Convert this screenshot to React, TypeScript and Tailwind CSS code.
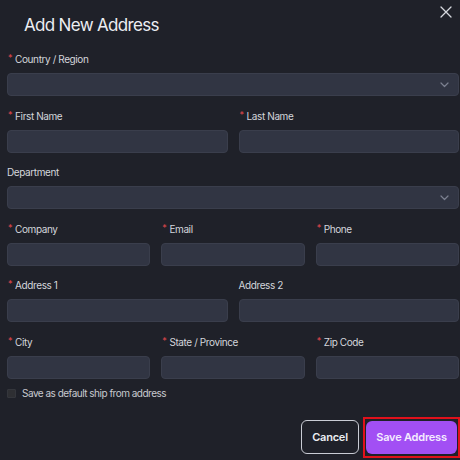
import React from "react";

const font = { fontFamily: "Inter, 'Noto Sans', sans-serif" };

function Label({ text, required }: { text: string; required?: boolean }) {
  return (
    <div className="flex items-center h-[14px] text-[10px] leading-[14px] text-[#d4d6dc] tracking-[-0.04em] mb-[7px]">
      {required ? (
        <span className="text-[#e5484d] text-[9px] mr-[3px] ml-[1px] -mt-[2px]">*</span>
      ) : null}
      <span>{text}</span>
    </div>
  );
}

function Input({ select }: { select?: boolean }) {
  return (
    <div className="relative h-[23px] rounded-[4px] bg-[#313543] border border-[#3a3e4c]">
      {select ? (
        <svg
          className="absolute right-[9px] top-[8px]"
          width="9"
          height="6"
          viewBox="0 0 9 6"
          fill="none"
        >
          <path d="M1 1l3.5 3.5L8 1" stroke="#7c8090" strokeWidth="1.2" strokeLinecap="round" strokeLinejoin="round" />
        </svg>
      ) : null}
    </div>
  );
}

function Field({ label, required, select }: { label: string; required?: boolean; select?: boolean }) {
  return (
    <div className="flex flex-col">
      <Label text={label} required={required} />
      <Input select={select} />
    </div>
  );
}

export default function App() {
  return (
    <div className="w-[460px] h-[460px] bg-[#1f2129] relative overflow-hidden" style={font}>
      <button className="absolute left-[440px] top-[6px] w-[12px] h-[12px] flex items-center justify-center">
        <svg width="12" height="12" viewBox="0 0 12 12" fill="none">
          <path d="M1 1l10 10M11 1L1 11" stroke="#d6d8de" strokeWidth="1.3" strokeLinecap="round" />
        </svg>
      </button>

      <div className="pl-[24px] pt-[14px] h-[52px]">
        <h2 className="text-[17px] leading-[23px] text-[#eceef2] tracking-[-0.04em]">Add New Address</h2>
      </div>

      <div className="pl-[7px] pr-[1px] flex flex-col gap-y-[12.6px]">
        <Field label="Country / Region" required select />
        <div className="grid grid-cols-2 gap-x-[11px]">
          <Field label="First Name" required />
          <Field label="Last Name" required />
        </div>
        <Field label="Department" select />
        <div className="grid grid-cols-3 gap-x-[11px]">
          <Field label="Company" required />
          <Field label="Email" required />
          <Field label="Phone" required />
        </div>
        <div className="grid grid-cols-2 gap-x-[11px]">
          <Field label="Address 1" required />
          <Field label="Address 2" />
        </div>
        <div className="grid grid-cols-3 gap-x-[11px]">
          <Field label="City" required />
          <Field label="State / Province" required />
          <Field label="Zip Code" required />
        </div>
      </div>

      <label className="flex items-center pl-[7px] mt-[10px] h-[9px]">
        <span className="w-[9px] h-[9px] rounded-[1px] bg-[#2e2f33] border border-[#34363c]" />
        <span className="ml-[6px] text-[10px] leading-[14px] text-[#c8cad0] tracking-[-0.05em]">
          Save as default ship from address
        </span>
      </label>

      <div className="flex justify-end items-center mt-[19px] pr-[1px]">
        <button className="w-[58px] h-[34px] rounded-[6px] border border-[#c9ccd4] text-[11px] font-semibold text-[#eceef2] tracking-[-0.02em]">
          Cancel
        </button>
        <div className="ml-[4px] w-[97px] h-[41px] border-2 border-[#e0111b] flex items-center justify-center -mr-[1px]">
          <button className="w-[91px] h-[33px] rounded-[6px] bg-[#a24ff4] text-[11px] font-semibold text-[#f4ecff] tracking-[-0.02em]">
            Save Address
          </button>
        </div>
      </div>
    </div>
  );
}
